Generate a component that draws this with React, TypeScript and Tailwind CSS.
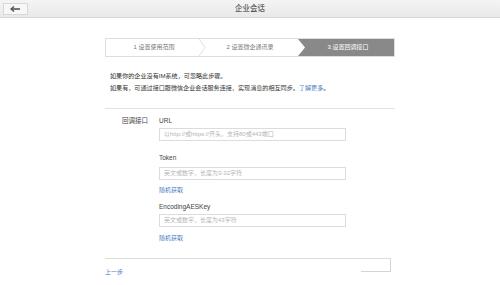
import React from "react";

const font = { fontFamily: '"Liberation Sans", "Noto Sans CJK SC", sans-serif' };

function Input({ placeholder }: { placeholder: string }) {
  return (
    <div className="h-[13px] w-[187px] border border-[#dcdcdc] bg-white pl-[4px] text-[6px] leading-[11px] text-[#b5b5b5]">
      {placeholder}
    </div>
  );
}

function Label({ children, className = "" }: { children: React.ReactNode; className?: string }) {
  return <div className={"h-[14px] leading-[14px] text-[6.5px] text-[#444] " + className}>{children}</div>;
}

function Link({ className = "" }: { className?: string }) {
  return <div className={"h-[12px] text-[6px] leading-[12px] text-[#4a7cc4] " + className}>随机获取</div>;
}

export default function App() {
  return (
    <div className="relative h-[285px] w-[500px] overflow-hidden bg-white" style={font}>
      {/* header */}
      <div className="relative flex h-[18px] items-center justify-center border-b border-[#d6d6d6] bg-gradient-to-b from-[#f4f4f4] to-[#e9e9e9]">
        <div className="absolute left-[3px] top-[3px] flex h-[12px] w-[25px] items-center justify-center border border-[#d8d8d8] bg-[#f7f7f7]">
          <svg width="11" height="6" viewBox="0 0 11 6">
            <path d="M1 3 H10" stroke="#555" strokeWidth="1.6" />
            <path d="M4 0.5 L1 3 L4 5.5" stroke="#555" strokeWidth="1.4" fill="none" />
          </svg>
        </div>
        <div className="text-[7.5px] text-[#333]">企业会话</div>
      </div>

      <div className="mx-auto w-[290px]">
        {/* stepper */}
        <div className="mt-[20px] flex h-[19px] border border-[#dedede] bg-white text-[6px]">
          <div className="relative flex w-[96px] items-center justify-center text-[#777]">
            1 设置使用范围
            <svg className="absolute right-[-4px] top-0" width="8" height="17" viewBox="0 0 8 17">
              <polyline points="1,0 7,8.5 1,17" fill="none" stroke="#e0e0e0" strokeWidth="1" />
            </svg>
          </div>
          <div className="flex w-[96px] items-center justify-center text-[#777]">2 设置微企通讯录</div>
          <div className="flex flex-1 items-center justify-center bg-[#898989] pl-[4px] text-white [clip-path:polygon(0_0,100%_0,100%_100%,0_100%,7px_50%)]">
            3.设置回调接口
          </div>
        </div>

        {/* description */}
        <div className="mt-[13px] pl-[5px] text-[6.1px] leading-[12px] text-[#333]">
          <div>如果你的企业没有IM系统，可忽略此步骤。</div>
          <div>
            如果有，可通过接口跟微信企业会话服务连接，实现消息的相互同步。<span className="text-[#4a7cc4]">了解更多</span>。
          </div>
        </div>

        <div className="mt-[14px] h-px bg-[#e2e2e2]" />

        {/* form */}
        <div className="mt-[5px] flex pl-[17px]">
          <Label className="w-[37px]">回调接口</Label>
          <div className="flex flex-col">
            <Label>URL</Label>
            <Input placeholder="以http://或https://开头，支持80或443端口" />
            <Label className="mt-[10px]">Token</Label>
            <div className="mt-[2px]">
              <Input placeholder="英文或数字，长度为3-32字符" />
            </div>
            <Link className="mt-[4px]" />
            <Label className="mt-[4px]">EncodingAESKey</Label>
            <Input placeholder="英文或数字，长度为43字符" />
            <Link className="mt-[5px]" />
          </div>
        </div>

        {/* footer */}
        <div className="mt-[14px] flex w-[286px] border-t border-[#dcdcdc]">
          <div className="flex-1 pt-[9px] text-[6px] leading-[8px] text-[#4a7cc4]">上一步</div>
          <div className="h-[13px] w-[30px] border-r border-b border-[#d4d4d4]" />
        </div>
      </div>
    </div>
  );
}
